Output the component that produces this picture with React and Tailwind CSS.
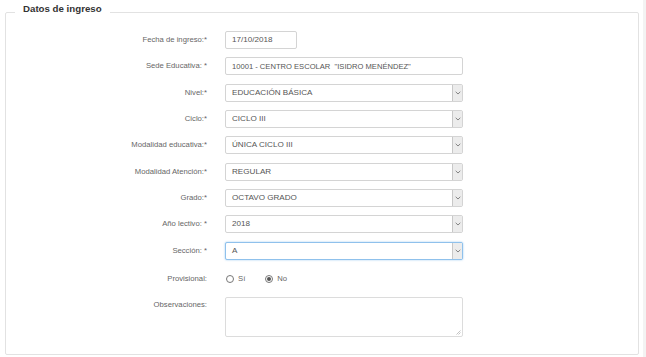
import React from "react";

const font = { fontFamily: '"Liberation Sans", Arial, sans-serif' };

function Chevron() {
  return (
    <svg width="6" height="4" viewBox="0 0 6 4" className="block">
      <path d="M0.7 0.8 L3 3 L5.3 0.8" fill="none" stroke="#777" strokeWidth="0.9" />
    </svg>
  );
}

function Select({ value, focus }) {
  return (
    <div
      className={
        "flex h-[18px] w-[238px] items-stretch rounded-[2px] border bg-white " +
        (focus
          ? "border-[#8fc1ec] shadow-[0_0_2px_rgba(102,175,233,0.7)]"
          : "border-[#d4d4d4]")
      }
    >
      <div className="flex flex-1 items-center pl-[6px] text-[8.1px] text-[#555]">{value}</div>
      <div className="flex w-[10px] items-center justify-center border-l border-[#c8c8c8] bg-[#ececec]">
        <Chevron />
      </div>
    </div>
  );
}

function Input({ value, w }) {
  return (
    <div
      className={
        "flex h-[18px] items-center rounded-[2px] border border-[#d4d4d4] bg-white pl-[6px] text-[#555] " +
        w
      }
    >
      {value}
    </div>
  );
}

function Row({ label, children }) {
  return (
    <div className="grid grid-cols-[201px_238px] items-center gap-x-[18px]">
      <div className="text-right text-[7.7px] leading-[10px] text-[#666]">{label}</div>
      <div className="flex">{children}</div>
    </div>
  );
}

export default function App() {
  return (
    <div className="relative h-[357px] w-[646px] overflow-hidden bg-white" style={font}>
      <div className="absolute right-0 top-0 h-full w-[3px] bg-[#f3f3f3]" />
      <fieldset className="ml-[5px] w-[634px] rounded-[2px] border border-[#e2e2e2] px-0 pb-[17px] pt-[7px]">
        <legend className="ml-[9px] h-[24px] px-[8px] pt-[2px] text-[9.7px] font-bold leading-[13px] text-[#333]">
          Datos de ingreso
        </legend>
        <div className="flex flex-col gap-y-[8.33px]">
          <Row label="Fecha de ingreso:*">
            <Input value="17/10/2018" w="w-[72px] text-[8.1px]" />
          </Row>
          <Row label="Sede Educativa: *">
            <Input value={'10001 - CENTRO ESCOLAR  "ISIDRO MENÉNDEZ"'} w="w-[238px] whitespace-pre text-[7.6px]" />
          </Row>
          <Row label="Nivel:*">
            <Select value="EDUCACIÓN BÁSICA" />
          </Row>
          <Row label="Ciclo:*">
            <Select value="CICLO III" />
          </Row>
          <Row label="Modalidad educativa:*">
            <Select value="ÚNICA CICLO III" />
          </Row>
          <Row label="Modalidad Atención:*">
            <Select value="REGULAR" />
          </Row>
          <Row label="Grado:*">
            <Select value="OCTAVO GRADO" />
          </Row>
          <Row label="Año lectivo: *">
            <Select value="2018" />
          </Row>
          <Row label="Sección: *">
            <Select value="A" focus />
          </Row>
        </div>
        <div className="mt-[11px] grid h-[16px] grid-cols-[201px_238px] items-center gap-x-[18px]">
          <div className="text-right text-[7.7px] leading-[10px] text-[#666]">Provisional:</div>
          <div className="flex items-center text-[7.7px] text-[#666]">
            <span className="ml-[1px] box-border block h-[8px] w-[8px] rounded-full border border-[#777] bg-white" />
            <span className="ml-[4px]">Sí</span>
            <span className="ml-[20px] box-border flex h-[8px] w-[8px] items-center justify-center rounded-full border border-[#777] bg-white">
              <span className="block h-[4px] w-[4px] rounded-full bg-[#555]" />
            </span>
            <span className="ml-[4px]">No</span>
          </div>
        </div>
        <div className="mt-[10px] grid grid-cols-[201px_238px] items-start gap-x-[18px]">
          <div className="pt-[3px] text-right text-[7.7px] leading-[10px] text-[#666]">Observaciones:</div>
          <div className="relative h-[40px] w-[238px] rounded-[2px] border border-[#dcdcdc] bg-white">
            <svg width="5" height="5" viewBox="0 0 5 5" className="absolute bottom-[1px] right-[1px]">
              <path d="M4.5 0.5 L0.5 4.5 M4.5 2.5 L2.5 4.5" stroke="#aaa" strokeWidth="0.7" />
            </svg>
          </div>
        </div>
      </fieldset>
    </div>
  );
}
